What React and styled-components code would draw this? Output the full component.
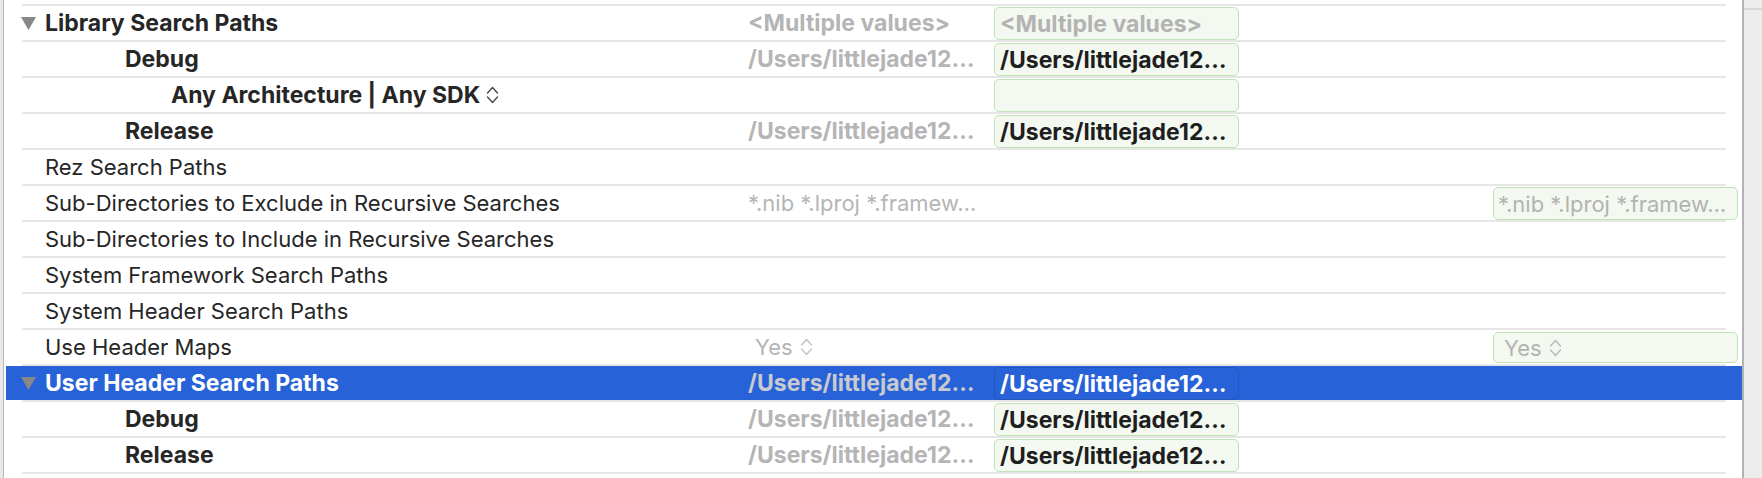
import styled, { createGlobalStyle } from "styled-components";

const GlobalStyle = createGlobalStyle`
  html, body {
    margin: 0;
    padding: 0;
    background: #ffffff;
  }
  body {
    font-family: Inter, "Liberation Sans", sans-serif;
    -webkit-font-smoothing: antialiased;
  }
`;

const PATH = "/Users/littlejade12…";

const rows = [
  { name: "Library Search Paths", bold: true, open: true, resolved: "<Multiple values>", resolvedBold: true, target: "<Multiple values>", targetMuted: true },
  { name: "Debug", bold: true, level: 1, resolved: PATH, resolvedBold: true, target: PATH },
  { name: "Any Architecture | Any SDK", bold: true, level: 2, stepper: true, target: "" },
  { name: "Release", bold: true, level: 1, resolved: PATH, resolvedBold: true, target: PATH },
  { name: "Rez Search Paths" },
  { name: "Sub-Directories to Exclude in Recursive Searches", resolved: "*.nib *.lproj *.framew…", project: "*.nib *.lproj *.framew…" },
  { name: "Sub-Directories to Include in Recursive Searches" },
  { name: "System Framework Search Paths" },
  { name: "System Header Search Paths" },
  { name: "Use Header Maps", resolved: "Yes", resolvedStepper: true, project: "Yes", projectStepper: true },
  { name: "User Header Search Paths", bold: true, open: true, selected: true, resolved: PATH, resolvedBold: true, target: PATH },
  { name: "Debug", bold: true, level: 1, resolved: PATH, resolvedBold: true, target: PATH },
  { name: "Release", bold: true, level: 1, resolved: PATH, resolvedBold: true, target: PATH },
];

const Stepper = ({ color = "#555" }) => (
  <svg width="13" height="20" viewBox="0 0 13 20" fill="none" stroke={color} strokeWidth="1.4" strokeLinecap="round" strokeLinejoin="round">
    <path d="M1.5 8 L6.5 2.5 L11.5 8" />
    <path d="M1.5 12 L6.5 17.5 L11.5 12" />
  </svg>
);

const Disclosure = () => (
  <svg width="15" height="13" viewBox="0 0 15 13">
    <path d="M0 0 H15 L7.5 13 Z" fill="#878787" />
  </svg>
);

export default function App() {
  return (
    <>
      <GlobalStyle />
      <Page>
        <List>
          {rows.map((r, i) => (
            <Row key={i} $selected={r.selected}>
              <NameCell $level={r.level || 0}>
                {r.open && (
                  <Toggle>
                    <Disclosure />
                  </Toggle>
                )}
                <Name $bold={r.bold} $selected={r.selected}>
                  {r.name}
                </Name>
                {r.stepper && <Stepper color="#4a4a4a" />}
              </NameCell>
              <ResolvedCell $bold={r.resolvedBold} $selected={r.selected} $popup={r.resolvedStepper}>
                {r.resolved}
                {r.resolvedStepper && <Stepper color="#c4c4c4" />}
              </ResolvedCell>
              <Cell>
                {r.target !== undefined && (
                  <ValueBox $selected={r.selected} $muted={r.targetMuted}>
                    {r.target}
                  </ValueBox>
                )}
              </Cell>
              <Cell />
              <Cell>
                {r.project && (
                  <ValueBox $plain $muted $popup={r.projectStepper}>
                    {r.project}
                    {r.projectStepper && <Stepper color="#b9b9b9" />}
                  </ValueBox>
                )}
              </Cell>
            </Row>
          ))}
          <Closing />
        </List>
        <Track />
      </Page>
    </>
  );
}

const Page = styled.div`
  display: flex;
  width: 1762px;
  height: 478px;
  overflow: hidden;
  background: #e8e8e8;
`;

const List = styled.div`
  flex: 1;
  margin-left: 3px;
  border-left: 1px solid #b9b9b9;
  padding: 4px 0 0 2px;
  background: #ffffff;
`;

const separator = `
  background-image: linear-gradient(#e6e6e6, #e6e6e6);
  background-size: calc(100% - 32px) 2px;
  background-position: 16px 0;
  background-repeat: no-repeat;
`;

const Row = styled.div`
  display: grid;
  grid-template-columns: 737px 251px 245px 254px 245px;
  height: 36px;
  box-sizing: border-box;
  padding-top: 2px;
  ${separator}
  ${(p) =>
    p.$selected &&
    `
    background-image: linear-gradient(#e6e6e6, #e6e6e6), linear-gradient(#2862d8, #2862d8);
    background-size: calc(100% - 32px) 2px, 100% 34px;
    background-position: 16px 0, 0 2px;
  `}
`;

const Cell = styled.div`
  min-width: 0;
  display: flex;
  align-items: center;
`;

const Closing = styled.div`
  height: 2px;
  ${separator}
`;

const NameCell = styled(Cell)`
  position: relative;
  gap: 6px;
  padding-left: ${(p) => (p.$level === 2 ? 165 : p.$level === 1 ? 119 : 39)}px;
`;

const Toggle = styled.span`
  position: absolute;
  left: 15px;
  top: 11px;
  display: flex;
`;

const boldText = `
  font-size: 23px;
  font-weight: 700;
  letter-spacing: 0;
`;

const plainText = `
  font-size: 22px;
  font-weight: 400;
`;

const Name = styled.span`
  ${(p) => (p.$bold ? boldText : plainText)}
  color: ${(p) => (p.$selected ? "#ffffff" : "#262626")};
  white-space: nowrap;
`;

const ResolvedCell = styled(Cell)`
  padding-left: ${(p) => (p.$popup ? 12 : 5)}px;
  gap: 7px;
  ${(p) => (p.$bold ? boldText : plainText)}
  color: ${(p) => (p.$selected ? "#c8cad0" : "#b5b5b5")};
  white-space: nowrap;
`;

const ValueBox = styled.div`
  box-sizing: border-box;
  width: 100%;
  height: ${(p) => (p.$popup ? 31 : 33)}px;
  align-self: flex-start;
  margin-top: ${(p) => (p.$popup ? 2 : 1)}px;
  display: flex;
  align-items: center;
  gap: 7px;
  padding: 0 4px 0 ${(p) => (p.$popup ? 10 : p.$plain ? 4 : 5)}px;
  border-radius: 5px;
  border: 1.5px solid ${(p) => (p.$selected ? "#2457be" : "#bfe2b9")};
  background: ${(p) => (p.$selected ? "transparent" : "#f3f8f1")};
  ${(p) => (p.$plain ? plainText : boldText)}
  color: ${(p) => (p.$selected ? "#ffffff" : p.$muted ? "#b3b3b3" : "#1e1e1e")};
  white-space: nowrap;
  overflow: hidden;
`;

const Track = styled.div`
  width: 18px;
  border-left: 2px solid #b3b3b3;
  background: #ececec linear-gradient(#d6d6d6, #d6d6d6) 0 8px / 100% 2px no-repeat;
`;
